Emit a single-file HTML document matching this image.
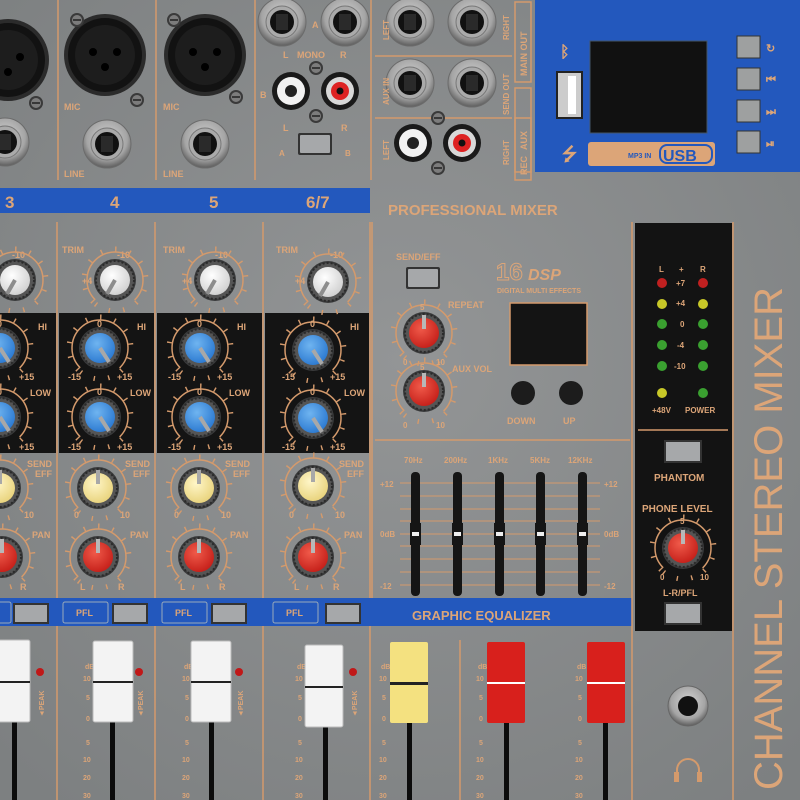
<!DOCTYPE html>
<html><head><meta charset="utf-8"><style>
html,body{margin:0;padding:0;background:#8a8c8d;}
svg{display:block}
text{font-family:"Liberation Sans",sans-serif;font-weight:bold;fill:#dca578}
</style></head><body>
<svg width="800" height="800" viewBox="0 0 800 800" xmlns="http://www.w3.org/2000/svg">
<defs>
<radialGradient id="bg" cx="50%" cy="45%" r="70%"><stop offset="0" stop-color="#939596"/><stop offset="1" stop-color="#7d8081"/></radialGradient>
<radialGradient id="kw" cx="40%" cy="35%" r="70%"><stop offset="0" stop-color="#ffffff"/><stop offset="1" stop-color="#cfcfcf"/></radialGradient>
<radialGradient id="kb" cx="40%" cy="35%" r="70%"><stop offset="0" stop-color="#6fb4f0"/><stop offset="1" stop-color="#2a78d0"/></radialGradient>
<radialGradient id="ky" cx="40%" cy="35%" r="70%"><stop offset="0" stop-color="#fff6c8"/><stop offset="1" stop-color="#e8d27a"/></radialGradient>
<radialGradient id="kr" cx="40%" cy="35%" r="70%"><stop offset="0" stop-color="#f05a4a"/><stop offset="1" stop-color="#c41e18"/></radialGradient>
<radialGradient id="jk" cx="50%" cy="40%" r="60%"><stop offset="0" stop-color="#d4d4d4"/><stop offset="0.7" stop-color="#a5a5a5"/><stop offset="1" stop-color="#5d5d5d"/></radialGradient>
<g id="arc"><circle r="28" fill="none" stroke="#d49a6c" stroke-width="1.5" stroke-dasharray="132 44" transform="rotate(135)"/><circle r="31" fill="none" stroke="#d49a6c" stroke-width="5" stroke-dasharray="1.4 13.2" transform="rotate(135)"/></g>
<g id="ring"><circle r="21" fill="#3a3b3c"/><circle r="19" fill="#555" stroke="#2a2a2a" stroke-width="2" stroke-dasharray="2 2"/></g>
<g id="kW"><use href="#ring"/><circle r="15" fill="url(#kw)"/><line x1="0" y1="0" x2="-8" y2="14" stroke="#8d8d8d" stroke-width="4"/></g>
<g id="kB"><use href="#ring"/><circle r="15" fill="url(#kb)"/><line x1="0" y1="0" x2="9" y2="14" stroke="#a8a8a8" stroke-width="4"/></g>
<g id="kY"><use href="#ring"/><circle r="15" fill="url(#ky)"/><line x1="0" y1="-18" x2="0" y2="-4" stroke="#a8a8a8" stroke-width="4"/></g>
<g id="kR"><use href="#ring"/><circle r="15" fill="url(#kr)"/><line x1="0" y1="-18" x2="0" y2="-4" stroke="#b8b8b8" stroke-width="4"/></g>
<g id="xlr"><circle r="41" fill="#2b2b2b"/><circle r="37" fill="#121212"/><circle r="30" fill="#1d1d1d"/><circle cx="-12" cy="-3" r="4" fill="#000"/><circle cx="12" cy="-3" r="4" fill="#000"/><circle cx="0" cy="12" r="4" fill="#000"/></g>
<g id="jack"><circle r="24" fill="url(#jk)" stroke="#6b6b6b"/><circle r="16" fill="#aaa" stroke="#777"/><circle r="12" fill="#111"/><rect x="-6" y="-8" width="12" height="16" fill="#2a2a2a"/></g>
<g id="rcaW"><circle r="19" fill="#1a1a1a"/><circle r="14" fill="#f2f2f2"/><circle r="6" fill="#222"/></g>
<g id="rcaR"><circle r="19" fill="#1a1a1a"/><circle r="14" fill="#d8d8d8"/><circle r="9" fill="#d22"/><circle r="3.5" fill="#111"/></g>
<g id="btn"><rect x="-17" y="-11" width="34" height="22" rx="2" fill="#333"/><rect x="-15" y="-9" width="30" height="18" rx="1" fill="#a6a8aa"/></g>
<g id="screw"><circle r="7" fill="#3a3a3a"/><circle r="5" fill="#7c7c7c"/><line x1="-4" y1="0" x2="4" y2="0" stroke="#222" stroke-width="1.5"/></g>
</defs>
<rect width="800" height="800" fill="url(#bg)"/>

<g stroke="#d49a6c" stroke-width="1.5">
<line x1="58" y1="0" x2="58" y2="180"/><line x1="156" y1="0" x2="156" y2="180"/><line x1="255" y1="0" x2="255" y2="180"/><line x1="371" y1="0" x2="371" y2="180"/>
<line x1="375" y1="56" x2="512" y2="56"/><line x1="375" y1="118" x2="512" y2="118"/>
</g>
<g fill="none" stroke="#d49a6c" stroke-width="1.5"><rect x="515" y="2" width="16" height="80"/><rect x="515" y="88" width="16" height="84"/><rect x="515" y="118" width="16" height="62"/></g>
<use href="#xlr" x="8" y="60"/><use href="#xlr" x="105" y="55"/><use href="#xlr" x="205" y="55"/>
<use href="#screw" x="77" y="20"/><use href="#screw" x="137" y="100"/><use href="#screw" x="174" y="20"/><use href="#screw" x="236" y="97"/><use href="#screw" x="36" y="103"/>
<use href="#jack" x="5" y="142"/><use href="#jack" x="107" y="144"/><use href="#jack" x="205" y="144"/>
<text x="64" y="110" font-size="9">MIC</text><text x="163" y="110" font-size="9">MIC</text>
<text x="64" y="177" font-size="9">LINE</text><text x="163" y="177" font-size="9">LINE</text>
<use href="#jack" x="282" y="22"/><use href="#jack" x="345" y="22"/>
<text x="312" y="28" font-size="9">A</text><text x="283" y="58" font-size="9">L</text><text x="297" y="58" font-size="9">MONO</text><text x="340" y="58" font-size="9">R</text>
<use href="#screw" x="316" y="68"/><use href="#screw" x="316" y="116"/>
<use href="#rcaW" x="291" y="91"/><use href="#rcaR" x="340" y="91"/>
<text x="260" y="98" font-size="9">B</text><text x="283" y="131" font-size="9">L</text><text x="341" y="131" font-size="9">R</text>
<use href="#btn" x="315" y="144"/><text x="279" y="156" font-size="8">A</text><text x="345" y="156" font-size="8">B</text>
<use href="#jack" x="410" y="22"/><use href="#jack" x="472" y="22"/><use href="#jack" x="410" y="83"/><use href="#jack" x="472" y="83"/>
<use href="#rcaW" x="413" y="143"/><use href="#rcaR" x="462" y="143"/><use href="#screw" x="438" y="118"/><use href="#screw" x="438" y="168"/>
<g font-size="8"><text transform="translate(389,40) rotate(-90)">LEFT</text><text transform="translate(509,40) rotate(-90)">RIGHT</text><text transform="translate(389,105) rotate(-90)">AUX IN</text><text transform="translate(509,115) rotate(-90)">SEND OUT</text><text transform="translate(389,160) rotate(-90)">LEFT</text><text transform="translate(509,165) rotate(-90)">RIGHT</text></g>
<g font-size="9"><text transform="translate(527,76) rotate(-90)">MAIN OUT</text><text transform="translate(527,150) rotate(-90)">AUX</text><text transform="translate(527,175) rotate(-90)">REC</text></g>

<rect x="535" y="0" width="265" height="172" fill="#2358bd"/>
<rect x="590" y="41" width="117" height="92" fill="#111" stroke="#456" />
<rect x="557" y="72" width="25" height="46" fill="#ccc" stroke="#222" stroke-width="2"/><rect x="568" y="76" width="8" height="38" fill="#fff"/>
<text x="560" y="57" font-size="16">ᛒ</text>
<text x="562" y="160" font-size="18">⭍</text>
<rect x="588" y="142" width="127" height="24" rx="3" fill="#dca578"/><rect x="660" y="145" width="52" height="18" rx="7" fill="none" stroke="#2358bd" stroke-width="2"/>
<text x="663" y="161" font-size="16" style="fill:#2358bd">USB</text><text x="628" y="158" font-size="7" style="fill:#2358bd">MP3 IN</text>
<g><rect x="737" y="36" width="23" height="22" fill="#9ea0a0" stroke="#333"/><rect x="737" y="68" width="23" height="22" fill="#9ea0a0" stroke="#333"/><rect x="737" y="100" width="23" height="22" fill="#9ea0a0" stroke="#333"/><rect x="737" y="131" width="23" height="22" fill="#9ea0a0" stroke="#333"/></g>
<g font-size="11"><text x="766" y="52">↻</text><text x="766" y="83">⏮</text><text x="766" y="115">⏭</text><text x="766" y="147">⏯</text></g>

<rect x="0" y="188" width="370" height="25" fill="#2358bd"/>
<g font-size="17"><text x="5" y="208">3</text><text x="110" y="208">4</text><text x="209" y="208">5</text><text x="306" y="208">6/7</text></g>
<text x="388" y="215" font-size="15">PROFESSIONAL MIXER</text>

<g stroke="#d49a6c" stroke-width="1.5"><line x1="57" y1="222" x2="57" y2="800"/><line x1="155" y1="222" x2="155" y2="800"/><line x1="263" y1="222" x2="263" y2="800"/><line x1="370" y1="222" x2="370" y2="800"/><line x1="460" y1="640" x2="460" y2="800"/></g>
<g fill="#141414"><rect x="0" y="313" width="56" height="140"/><rect x="59" y="313" width="95" height="140"/><rect x="157" y="313" width="105" height="140"/><rect x="265" y="313" width="104" height="140"/></g>
<g font-size="9"><text x="62" y="253">TRIM</text><text x="163" y="253">TRIM</text><text x="276" y="253">TRIM</text>
<text x="12" y="258">-10</text><text x="117" y="258">-10</text><text x="215" y="258">-10</text><text x="330" y="258">-10</text>
<text x="82" y="284">+4</text><text x="182" y="284">+4</text><text x="295" y="284">+4</text></g>
<use href="#arc" x="15" y="280"/><use href="#arc" x="115" y="280"/><use href="#arc" x="215" y="280"/><use href="#arc" x="328" y="282"/>
<use href="#kW" x="15" y="280"/><use href="#kW" x="115" y="280"/><use href="#kW" x="215" y="280"/><use href="#kW" x="328" y="282"/>
<use href="#arc" x="0" y="348"/><use href="#arc" x="100" y="348"/><use href="#arc" x="200" y="348"/><use href="#arc" x="313" y="350"/>
<use href="#arc" x="0" y="417"/><use href="#arc" x="100" y="417"/><use href="#arc" x="200" y="417"/><use href="#arc" x="313" y="418"/>
<use href="#kB" x="0" y="348"/><use href="#kB" x="100" y="348"/><use href="#kB" x="200" y="348"/><use href="#kB" x="313" y="350"/>
<use href="#kB" x="0" y="417"/><use href="#kB" x="100" y="417"/><use href="#kB" x="200" y="417"/><use href="#kB" x="313" y="418"/>
<g font-size="9">
<text x="38" y="330">HI</text><text x="137" y="330">HI</text><text x="237" y="330">HI</text><text x="350" y="330">HI</text>
<text x="30" y="396">LOW</text><text x="130" y="396">LOW</text><text x="229" y="396">LOW</text><text x="344" y="396">LOW</text>
<text x="-3" y="327">0</text><text x="97" y="327">0</text><text x="197" y="327">0</text><text x="310" y="327">0</text>
<text x="-3" y="395">0</text><text x="97" y="395">0</text><text x="197" y="395">0</text><text x="310" y="395">0</text>
<text x="19" y="380">+15</text><text x="117" y="380">+15</text><text x="217" y="380">+15</text><text x="330" y="380">+15</text>
<text x="68" y="380">-15</text><text x="168" y="380">-15</text><text x="282" y="380">-15</text>
<text x="19" y="450">+15</text><text x="117" y="450">+15</text><text x="217" y="450">+15</text><text x="330" y="450">+15</text>
<text x="68" y="450">-15</text><text x="168" y="450">-15</text><text x="282" y="450">-15</text>
</g>
<use href="#arc" x="0" y="488"/><use href="#arc" x="98" y="488"/><use href="#arc" x="199" y="488"/><use href="#arc" x="313" y="486"/>
<use href="#kY" x="0" y="488"/><use href="#kY" x="98" y="488"/><use href="#kY" x="199" y="488"/><use href="#kY" x="313" y="486"/>
<use href="#arc" x="2" y="557"/><use href="#arc" x="98" y="557"/><use href="#arc" x="199" y="557"/><use href="#arc" x="313" y="557"/>
<use href="#kR" x="2" y="557"/><use href="#kR" x="98" y="557"/><use href="#kR" x="199" y="557"/><use href="#kR" x="313" y="557"/>
<g font-size="9">
<text x="27" y="467">SEND</text><text x="35" y="477">EFF</text><text x="125" y="467">SEND</text><text x="133" y="477">EFF</text><text x="225" y="467">SEND</text><text x="233" y="477">EFF</text><text x="339" y="467">SEND</text><text x="347" y="477">EFF</text>
<text x="24" y="518">10</text><text x="74" y="518">0</text><text x="120" y="518">10</text><text x="174" y="518">0</text><text x="221" y="518">10</text><text x="289" y="518">0</text><text x="335" y="518">10</text>
<text x="32" y="538">PAN</text><text x="130" y="538">PAN</text><text x="230" y="538">PAN</text><text x="344" y="538">PAN</text>
<text x="20" y="590">R</text><text x="80" y="590">L</text><text x="118" y="590">R</text><text x="180" y="590">L</text><text x="219" y="590">R</text><text x="294" y="590">L</text><text x="333" y="590">R</text>
</g>

<rect x="0" y="598" width="632" height="28" fill="#2358bd"/>
<g fill="none" stroke="#9ab" stroke-width="1"><rect x="-5" y="602" width="16" height="21" rx="2"/><rect x="63" y="602" width="45" height="21" rx="2"/><rect x="162" y="602" width="45" height="21" rx="2"/><rect x="273" y="602" width="45" height="21" rx="2"/></g>
<g font-size="9" style="fill:#e8c8b0"><text x="76" y="616">PFL</text><text x="175" y="616">PFL</text><text x="286" y="616">PFL</text></g>
<g><rect x="13" y="603" width="36" height="21" fill="#333"/><rect x="15" y="605" width="32" height="17" fill="#a6a8aa"/>
<rect x="112" y="603" width="36" height="21" fill="#333"/><rect x="114" y="605" width="32" height="17" fill="#a6a8aa"/>
<rect x="211" y="603" width="36" height="21" fill="#333"/><rect x="213" y="605" width="32" height="17" fill="#a6a8aa"/>
<rect x="325" y="603" width="36" height="21" fill="#333"/><rect x="327" y="605" width="32" height="17" fill="#a6a8aa"/></g>
<text x="412" y="620" font-size="13">GRAPHIC EQUALIZER</text>

<!-- faders -->
<g fill="#0c0c0c"><rect x="12" y="720" width="5" height="80"/><rect x="110" y="720" width="5" height="80"/><rect x="209" y="720" width="5" height="80"/><rect x="323" y="725" width="5" height="75"/><rect x="407" y="722" width="5" height="78"/><rect x="504" y="722" width="5" height="78"/><rect x="603" y="722" width="5" height="78"/></g>
<g font-size="7">
<text x="85" y="669">dB</text><text x="83" y="681">10</text><text x="86" y="700">5</text><text x="86" y="721">0</text><text x="86" y="745">5</text><text x="83" y="762">10</text><text x="83" y="780">20</text><text x="83" y="798">30</text>
<text x="184" y="669">dB</text><text x="182" y="681">10</text><text x="185" y="700">5</text><text x="185" y="721">0</text><text x="185" y="745">5</text><text x="182" y="762">10</text><text x="182" y="780">20</text><text x="182" y="798">30</text>
<text x="297" y="669">dB</text><text x="295" y="681">10</text><text x="298" y="700">5</text><text x="298" y="721">0</text><text x="298" y="745">5</text><text x="295" y="762">10</text><text x="295" y="780">20</text><text x="295" y="798">30</text>
<text x="381" y="669">dB</text><text x="379" y="681">10</text><text x="382" y="700">5</text><text x="382" y="721">0</text><text x="382" y="745">5</text><text x="379" y="762">10</text><text x="379" y="780">20</text><text x="379" y="798">30</text>
<text x="478" y="669">dB</text><text x="476" y="681">10</text><text x="479" y="700">5</text><text x="479" y="721">0</text><text x="479" y="745">5</text><text x="476" y="762">10</text><text x="476" y="780">20</text><text x="476" y="798">30</text>
<text x="577" y="669">dB</text><text x="575" y="681">10</text><text x="578" y="700">5</text><text x="578" y="721">0</text><text x="578" y="745">5</text><text x="575" y="762">10</text><text x="575" y="780">20</text><text x="575" y="798">30</text></g>
<g fill="#f3f3f3" stroke="#bbb"><rect x="-2" y="640" width="32" height="82" rx="2"/><rect x="93" y="641" width="40" height="81" rx="2"/><rect x="191" y="641" width="40" height="81" rx="2"/><rect x="305" y="645" width="38" height="82" rx="2"/></g>
<rect x="390" y="642" width="38" height="81" rx="2" fill="#f4e180"/>
<rect x="487" y="642" width="38" height="81" rx="2" fill="#d8201c"/><rect x="587" y="642" width="38" height="81" rx="2" fill="#d8201c"/>
<g fill="#222"><rect x="-2" y="681" width="32" height="2"/><rect x="93" y="681" width="40" height="2"/><rect x="191" y="681" width="40" height="2"/><rect x="305" y="686" width="38" height="2"/><rect x="390" y="682" width="38" height="3"/></g>
<g fill="#fff"><rect x="487" y="682" width="38" height="2"/><rect x="587" y="682" width="38" height="2"/></g>
<g fill="#c01818"><circle cx="40" cy="672" r="4"/><circle cx="139" cy="672" r="4"/><circle cx="239" cy="672" r="4"/><circle cx="353" cy="672" r="4"/></g>
<g font-size="7"><text transform="translate(44,717) rotate(-90)">◄PEAK</text><text transform="translate(143,717) rotate(-90)">◄PEAK</text><text transform="translate(243,717) rotate(-90)">◄PEAK</text><text transform="translate(357,717) rotate(-90)">◄PEAK</text></g>

<line x1="375" y1="440" x2="630" y2="440" stroke="#d49a6c" stroke-width="1.5"/>
<line x1="372" y1="222" x2="372" y2="598" stroke="#d49a6c" stroke-width="1.5"/>
<text x="396" y="260" font-size="9">SEND/EFF</text>
<use href="#btn" x="423" y="278"/>
<text x="496" y="280" font-size="24" font-weight="normal" style="fill:none;stroke:#dca578;stroke-width:1">16</text>
<text x="528" y="280" font-size="16" font-style="italic">DSP</text>
<text x="497" y="293" font-size="7">DIGITAL MULTI EFFECTS</text>
<rect x="510" y="303" width="77" height="62" fill="#141414" stroke="#d49a6c" stroke-width="1.5"/>
<text x="448" y="308" font-size="9">REPEAT</text><text x="452" y="372" font-size="9">AUX VOL</text>
<use href="#arc" x="424" y="333"/><use href="#kR" x="424" y="333"/>
<use href="#arc" x="424" y="391"/><use href="#kR" x="424" y="391"/>
<g font-size="8"><text x="420" y="310">5</text><text x="420" y="370">5</text><text x="403" y="365">0</text><text x="436" y="365">10</text><text x="403" y="428">0</text><text x="436" y="428">10</text></g>
<circle cx="523" cy="393" r="12" fill="#1c1c1c"/><circle cx="571" cy="393" r="12" fill="#1c1c1c"/>
<text x="507" y="424" font-size="9">DOWN</text><text x="563" y="424" font-size="9">UP</text>
<g font-size="8"><text x="404" y="463">70Hz</text><text x="444" y="463">200Hz</text><text x="488" y="463">1KHz</text><text x="530" y="463">5KHz</text><text x="568" y="463">12KHz</text>
<text x="380" y="487">+12</text><text x="380" y="537">0dB</text><text x="380" y="589">-12</text><text x="604" y="487">+12</text><text x="604" y="537">0dB</text><text x="604" y="589">-12</text></g>
<g stroke="#d49a6c" stroke-width="1"><line x1="400" y1="483" x2="600" y2="483"/><line x1="400" y1="496" x2="600" y2="496"/><line x1="400" y1="509" x2="600" y2="509"/><line x1="400" y1="521" x2="600" y2="521"/><line x1="400" y1="534" x2="600" y2="534"/><line x1="400" y1="546" x2="600" y2="546"/><line x1="400" y1="559" x2="600" y2="559"/><line x1="400" y1="572" x2="600" y2="572"/><line x1="400" y1="585" x2="600" y2="585"/></g>
<g fill="#151515"><rect x="411" y="472" width="9" height="124" rx="4"/><rect x="453" y="472" width="9" height="124" rx="4"/><rect x="495" y="472" width="9" height="124" rx="4"/><rect x="536" y="472" width="9" height="124" rx="4"/><rect x="578" y="472" width="9" height="124" rx="4"/>
<rect x="410" y="523" width="11" height="22"/><rect x="452" y="523" width="11" height="22"/><rect x="494" y="523" width="11" height="22"/><rect x="535" y="523" width="11" height="22"/><rect x="577" y="523" width="11" height="22"/></g>
<g fill="#eee"><rect x="412" y="532" width="7" height="4"/><rect x="454" y="532" width="7" height="4"/><rect x="496" y="532" width="7" height="4"/><rect x="537" y="532" width="7" height="4"/><rect x="579" y="532" width="7" height="4"/></g>

<line x1="632" y1="222" x2="632" y2="800" stroke="#d49a6c" stroke-width="1.5"/>
<line x1="733" y1="222" x2="733" y2="800" stroke="#d49a6c" stroke-width="1.5"/>
<rect x="635" y="223" width="97" height="408" fill="#131313"/>
<line x1="638" y1="430" x2="728" y2="430" stroke="#d49a6c" stroke-width="1.5"/>
<g font-size="8"><text x="659" y="272">L</text><text x="679" y="272">+</text><text x="700" y="272">R</text>
<text x="676" y="286">+7</text><text x="676" y="306">+4</text><text x="680" y="327">0</text><text x="677" y="348">-4</text><text x="674" y="369">-10</text>
<text x="652" y="413">+48V</text><text x="685" y="413">POWER</text></g>
<g><circle cx="662" cy="283" r="5" fill="#c02020"/><circle cx="703" cy="283" r="5" fill="#c02020"/>
<circle cx="662" cy="304" r="5" fill="#c8c828"/><circle cx="703" cy="304" r="5" fill="#c8c828"/>
<circle cx="662" cy="324" r="5" fill="#3aa030"/><circle cx="703" cy="324" r="5" fill="#3aa030"/>
<circle cx="662" cy="345" r="5" fill="#3aa030"/><circle cx="703" cy="345" r="5" fill="#3aa030"/>
<circle cx="662" cy="366" r="5" fill="#3aa030"/><circle cx="703" cy="366" r="5" fill="#3aa030"/>
<circle cx="662" cy="393" r="5" fill="#c8c828"/><circle cx="703" cy="393" r="5" fill="#3aa030"/></g>
<rect x="665" y="441" width="36" height="21" fill="#a6a8aa" stroke="#333" stroke-width="2"/>
<text x="654" y="481" font-size="10">PHANTOM</text>
<text x="642" y="512" font-size="10">PHONE LEVEL</text>
<use href="#arc" x="683" y="548"/><use href="#kR" x="683" y="548"/>
<g font-size="8"><text x="680" y="524">5</text><text x="660" y="580">0</text><text x="700" y="580">10</text></g>
<text x="663" y="596" font-size="9">L-R/PFL</text>
<rect x="665" y="603" width="36" height="21" fill="#a6a8aa" stroke="#333" stroke-width="2"/>
<circle cx="688" cy="706" r="20" fill="url(#jk)" stroke="#666"/><circle cx="688" cy="706" r="10" fill="#111"/>
<path d="M677 780 v-10 a11 11 0 0 1 22 0 v10" fill="none" stroke="#d49a6c" stroke-width="2"/>
<rect x="674" y="772" width="5" height="10" fill="#d49a6c"/><rect x="697" y="772" width="5" height="10" fill="#d49a6c"/>
<text transform="translate(782,287) rotate(-90)" text-anchor="end" font-size="40" style="font-weight:normal">CHANNEL STEREO MIXER</text>
</svg>
</body></html>
